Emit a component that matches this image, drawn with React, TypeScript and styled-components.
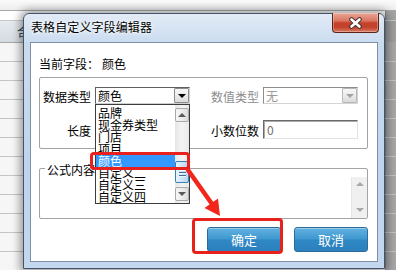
import React from "react";
import styled, { createGlobalStyle } from "styled-components";

const Global = createGlobalStyle`
  html, body { margin: 0; padding: 0; width: 396px; height: 270px; overflow: hidden; background: #fff; }
  body { font-family: "Noto Sans CJK SC", "Liberation Sans", sans-serif; font-size: 12px; color: #000; }
  * { box-sizing: border-box; }
`;

/* ---------- background application ---------- */
const Screen = styled.div`
  position: relative;
  width: 396px;
  height: 270px;
  overflow: hidden;
  display: flex;
  flex-direction: column;
  background: #f4f4f4;
`;

const Band = styled.div<{ $h: number; $bg: string; $line: string }>`
  flex: none;
  height: ${(p) => p.$h}px;
  display: flex;
  background: ${(p) => p.$bg};
  border-bottom: 1px solid ${(p) => p.$line};
`;

const BandMain = styled.div`
  flex: 1;
  display: flex;
  align-items: center;
  padding-left: 17px;
  font-size: 12px;
  color: #2c4656;
`;

const Side = styled.div<{ $bg: string }>`
  width: 11px;
  flex: none;
  background: ${(p) => p.$bg};
  border-left: 1px solid #8a8a8a;
`;

/* ---------- dialog window ---------- */
const Window = styled.div`
  position: absolute;
  left: 23px;
  top: 13px;
  width: 362px;
  height: 256px;
  border: 1px solid #43536a;
  border-radius: 6px 6px 0 0;
  background: linear-gradient(180deg, #e2ebf6 0%, #c9dbef 12%, #bfd4ec 60%, #c3d7ee 100%);
  box-shadow: 0 0 9px 3px rgba(0, 0, 0, 0.38);
  display: flex;
  flex-direction: column;
`;

const TitleBar = styled.div`
  height: 28px;
  flex: none;
  display: flex;
  align-items: flex-start;
  padding: 0 5px 0 7px;
`;

const Title = styled.div`
  flex: 1;
  font-size: 12px;
  line-height: 26px;
  letter-spacing: 0.1px;
  color: #000;
  text-shadow: 0 0 5px #fff, 0 0 3px #fff;
`;

const CloseBtn = styled.div`
  width: 47px;
  height: 20px;
  margin-top: -1px;
  border: 1px solid #5e2318;
  border-top: none;
  border-radius: 0 0 4px 4px;
  background: linear-gradient(180deg, #e9a798 0%, #da745f 42%, #c5412b 52%, #c4432d 75%, #d97a60 100%);
  box-shadow: inset 0 0 0 1px rgba(255, 255, 255, 0.3);
  display: flex;
  align-items: center;
  justify-content: center;
`;

const Client = styled.div`
  margin: 0 6px;
  height: 220px;
  flex: none;
  border: 1px solid #7f90a6;
  background: #fff;
  display: flex;
  flex-direction: column;
  padding: 13px 9px 9px 8px;
`;

const Current = styled.div`
  height: 16px;
  line-height: 16px;
  font-size: 12px;
  display: flex;
`;

const CurrentValue = styled.span`
  margin-left: 3px;
`;

const Group = styled.div`
  margin-top: 5px;
  height: 72px;
  border: 1px solid #a3a3a3;
  border-radius: 2px;
  padding: 9px 0 0 3px;
  display: flex;
  flex-direction: column;
  gap: 16px;
`;

const FormRow = styled.div<{ $h: number }>`
  height: ${(p) => p.$h}px;
  display: flex;
  gap: 21px;
`;

const Field = styled.div`
  display: flex;
  align-items: center;
  gap: 4px;
`;

const Label = styled.span<{ $disabled?: boolean }>`
  width: 48px;
  padding-top: 2px;
  text-align: right;
  font-size: 12px;
  line-height: 14px;
  white-space: nowrap;
  color: ${(p) => (p.$disabled ? "#8d8d8d" : "#000")};
`;

const Combo = styled.div<{ $disabled?: boolean }>`
  position: relative;
  width: 95px;
  height: 17px;
  border: 1px solid;
  border-color: ${(p) => (p.$disabled ? "#8e8e8e #d4d4d4 #d4d4d4 #8e8e8e" : "#5f5f5f #cfcfcf #cfcfcf #5f5f5f")};
  background: #fff;
  display: flex;
  align-items: center;
`;

const ComboText = styled.span<{ $disabled?: boolean }>`
  flex: 1;
  padding-left: 2px;
  font-size: 12px;
  line-height: 15px;
  color: ${(p) => (p.$disabled ? "#9a9a9a" : "#000")};
`;

const DropBtn = styled.div<{ $disabled?: boolean }>`
  width: 15px;
  height: 15px;
  border: 1px solid ${(p) => (p.$disabled ? "#b8b8b8" : "#8c8c8c")};
  border-radius: 1px;
  background: linear-gradient(180deg, #f7f7f7 0%, #ececec 50%, #dadada 100%);
  display: flex;
  align-items: center;
  justify-content: center;
`;

const Tri = styled.span<{ $color: string; $up?: boolean }>`
  width: 0;
  height: 0;
  border-left: 4px solid transparent;
  border-right: 4px solid transparent;
  ${(p) => (p.$up ? `border-bottom: 4px solid ${p.$color};` : `border-top: 4px solid ${p.$color};`)}
`;

const TextBox = styled.div`
  width: 95px;
  height: 19px;
  border: 1px solid;
  border-color: #6a6a6a #e2e2e2 #e2e2e2 #6a6a6a;
  box-shadow: inset 1px 1px 0 #a9a9a9;
  background: #fff;
  padding-left: 3px;
  font-size: 12px;
  line-height: 17px;
  color: #6e6e6e;
`;

const ListBox = styled.div`
  position: absolute;
  left: -1px;
  top: 16px;
  width: 95px;
  height: 100px;
  border: 1px solid #3c3c3c;
  background: #fff;
  display: flex;
  z-index: 3;
  overflow: hidden;
`;

const ListItems = styled.div`
  flex: 1;
  padding-top: 2px;
  overflow: hidden;
`;

const ListItem = styled.div<{ $sel?: boolean }>`
  height: 12px;
  line-height: 12px;
  font-size: 12px;
  padding-left: 2px;
  white-space: nowrap;
  background: ${(p) => (p.$sel ? "#3399ff" : "transparent")};
  color: ${(p) => (p.$sel ? "#fff" : "#000")};
`;

const ListScroll = styled.div`
  width: 14px;
  flex: none;
  display: flex;
  flex-direction: column;
  padding: 3px 0 1px;
  background: linear-gradient(90deg, #e6e6e6 0%, #f4f4f4 50%, #e9e9e9 100%);
`;

const ScrollBtn = styled.div`
  height: 14px;
  flex: none;
  border: 1px solid #a9a9a9;
  border-radius: 2px;
  background: linear-gradient(90deg, #f7f7f7 0%, #e9e9e9 60%, #dcdcdc 100%);
  display: flex;
  align-items: center;
  justify-content: center;
`;

const Track = styled.div<{ $h: number }>`
  height: ${(p) => p.$h}px;
  flex: none;
`;

const Thumb = styled.div`
  height: 22px;
  flex: none;
  border: 1px solid #3c7fb1;
  border-radius: 2px;
  background: linear-gradient(90deg, #e8f4fd 0%, #cfe6f8 50%, #b7d8f2 100%);
  display: flex;
  flex-direction: column;
  align-items: center;
  justify-content: center;
  gap: 2px;
`;

const Grip = styled.span`
  width: 7px;
  height: 1px;
  background: #3f6f99;
  box-shadow: 0 1px 0 #eaf5ff;
`;

const RedBox = styled.div<{ $l: number; $t: number; $w: number; $h: number }>`
  position: absolute;
  left: ${(p) => p.$l}px;
  top: ${(p) => p.$t}px;
  width: ${(p) => p.$w}px;
  height: ${(p) => p.$h}px;
  border: 3px solid #e8211c;
  border-radius: 4px;
  z-index: 4;
  pointer-events: none;
`;

const FormulaGroup = styled.div`
  margin-top: 19px;
  height: 51px;
  border: 1px solid #a3a3a3;
  border-radius: 2px;
  display: flex;
  flex-direction: column;
`;

const Caption = styled.span`
  align-self: flex-start;
  margin: -6px 0 0 5px;
  padding: 0 2px;
  height: 14px;
  line-height: 14px;
  font-size: 12px;
  background: #fff;
`;

const FormulaBody = styled.div`
  flex: 1;
  display: flex;
  justify-content: flex-end;
`;

const VScroll = styled.div`
  width: 16px;
  background: #f0f0f0;
  border-left: 1px solid #e6e6e6;
  display: flex;
  flex-direction: column;
  justify-content: space-between;
  align-items: center;
  padding: 5px 0 6px;
`;

const Buttons = styled.div`
  margin-top: 8px;
  display: flex;
  justify-content: flex-end;
  gap: 13px;
`;

const Button = styled.div`
  position: relative;
  width: 74px;
  height: 25px;
  border: 1px solid #2a6c9c;
  border-radius: 3px;
  background: linear-gradient(180deg, #63b2e0 0%, #3e97cf 48%, #2f88c4 52%, #2b80bd 100%);
  box-shadow: inset 0 1px 0 rgba(255, 255, 255, 0.35);
  color: #fff;
  font-size: 13px;
  line-height: 23px;
  text-align: center;
`;

const Arrow = styled.svg`
  position: absolute;
  left: 160px;
  top: 152px;
  z-index: 5;
  overflow: visible;
`;

const items = ["品牌", "现金券类型", "门店", "项目", "颜色", "自定义二", "自定义三", "自定义四"];

export default function App() {
  const rows = Array.from({ length: 12 });
  return (
    <>
      <Global />
      <Screen>
        <Band $h={11} $bg="linear-gradient(180deg,#fbfbfb,#ededed)" $line="#a9a9a9">
          <BandMain />
        </Band>
        <Band $h={10} $bg="#ffffff" $line="#c9c9c9">
          <BandMain />
          <Side $bg="#a4a4a4" />
        </Band>
        <Band $h={22} $bg="linear-gradient(180deg,#e6eaef,#d5dbe2)" $line="#a7a7a7">
          <BandMain>合</BandMain>
          <Side $bg="#9e9e9e" />
        </Band>
        {rows.map((_, i) => (
          <Band key={i} $h={19} $bg="#f6f6f6" $line="#c4c4c4">
            <BandMain />
            <Side $bg="#a7a7a7" />
          </Band>
        ))}

        <Window>
          <TitleBar>
            <Title>表格自定义字段编辑器</Title>
            <CloseBtn>
              <svg width="15" height="12" viewBox="0 0 15 12">
                <path d="M3.5 2.5 L11.5 9.5 M11.5 2.5 L3.5 9.5" stroke="#4a3430" strokeWidth="4.6" strokeLinecap="round" />
                <path d="M3.5 2.5 L11.5 9.5 M11.5 2.5 L3.5 9.5" stroke="#ffffff" strokeWidth="2.6" strokeLinecap="round" />
              </svg>
            </CloseBtn>
          </TitleBar>

          <Client>
            <Current>
              当前字段：<CurrentValue>颜色</CurrentValue>
            </Current>

            <Group>
              <FormRow $h={17}>
                <Field>
                  <Label>数据类型</Label>
                  <Combo>
                    <ComboText>颜色</ComboText>
                    <DropBtn>
                      <Tri $color="#000" />
                    </DropBtn>
                    <ListBox>
                      <ListItems>
                        {items.map((t) => (
                          <ListItem key={t} $sel={t === "颜色"}>
                            {t}
                          </ListItem>
                        ))}
                      </ListItems>
                      <ListScroll>
                        <ScrollBtn>
                          <Tri $color="#5a5a5a" $up />
                        </ScrollBtn>
                        <Track $h={39} />
                        <Thumb>
                          <Grip />
                          <Grip />
                          <Grip />
                        </Thumb>
                        <Track $h={4} />
                        <ScrollBtn>
                          <Tri $color="#5a5a5a" />
                        </ScrollBtn>
                      </ListScroll>
                    </ListBox>
                    <RedBox $l={-6} $t={64} $w={100} $h={18} />
                  </Combo>
                </Field>
                <Field>
                  <Label $disabled>数值类型</Label>
                  <Combo $disabled>
                    <ComboText $disabled>无</ComboText>
                    <DropBtn $disabled>
                      <Tri $color="#a3a3a3" />
                    </DropBtn>
                  </Combo>
                </Field>
              </FormRow>
              <FormRow $h={19}>
                <Field>
                  <Label>长度</Label>
                  <TextBox />
                </Field>
                <Field>
                  <Label>小数位数</Label>
                  <TextBox>0</TextBox>
                </Field>
              </FormRow>
            </Group>

            <FormulaGroup>
              <Caption>公式内容</Caption>
              <FormulaBody>
                <VScroll>
                  <Tri $color="#a8a8a8" $up />
                  <Tri $color="#a8a8a8" />
                </VScroll>
              </FormulaBody>
            </FormulaGroup>

            <Buttons>
              <Button>
                确定
                <RedBox $l={-16} $t={-10} $w={91} $h={36} />
              </Button>
              <Button>取消</Button>
            </Buttons>
          </Client>

          <Arrow width="40" height="54" viewBox="0 0 40 54">
            <line x1="4" y1="4" x2="28" y2="38" stroke="#f2261b" strokeWidth="4.5" strokeLinecap="round" />
            <polygon points="36,50 20.5,42 34,32.5" fill="#f2261b" />
          </Arrow>
        </Window>
      </Screen>
    </>
  );
}
